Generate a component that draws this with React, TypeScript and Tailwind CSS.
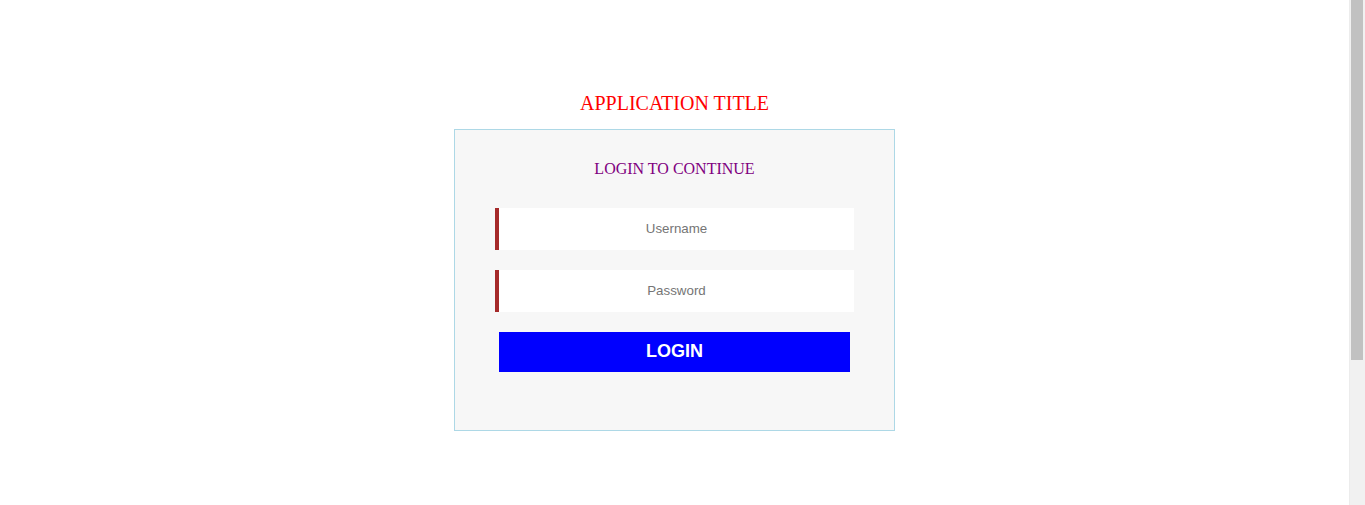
import React from "react";

export default function App() {
  return (
    <div className="flex h-screen overflow-hidden bg-white">
      <main className="flex-1 pt-[91px]">
        <h1 className="text-center text-[20px] leading-[24px] text-[#ff0000] font-['Liberation_Serif',serif] font-normal">
          APPLICATION TITLE
        </h1>
        <div className="mx-auto mt-[14px] w-[441px] border border-[#add8e6] bg-[#f7f7f7] pt-[30px] pb-[58px]">
          <h2 className="text-center text-[16px] leading-[18px] text-[#800080] font-['Liberation_Serif',serif] font-normal">
            LOGIN TO CONTINUE
          </h2>
          <div className="mt-[30px] flex flex-col gap-[20px] px-10">
            <input
              type="text"
              placeholder="Username"
              className="h-[42px] w-full border-l-4 border-[#a52a2a] bg-white pb-px text-center text-[13.333px] font-['Liberation_Sans',Arial,sans-serif] outline-none placeholder:text-[#757575]"
            />
            <input
              type="password"
              placeholder="Password"
              className="h-[42px] w-full border-l-4 border-[#a52a2a] bg-white pb-px text-center text-[13.333px] font-['Liberation_Sans',Arial,sans-serif] outline-none placeholder:text-[#757575]"
            />
          </div>
          <div className="mt-[20px] px-[44px]">
            <button className="flex h-[40px] w-full items-center justify-center bg-[#0000ff] pb-px text-[18px] font-bold text-white font-['Liberation_Sans',Arial,sans-serif]">
              LOGIN
            </button>
          </div>
        </div>
      </main>
      <aside className="flex w-4 flex-col border-l border-[#ececec] bg-[#f1f1f1] pl-px pr-[2px]">
        <div className="h-[360px] w-full bg-[#c1c1c1]" />
      </aside>
    </div>
  );
}
